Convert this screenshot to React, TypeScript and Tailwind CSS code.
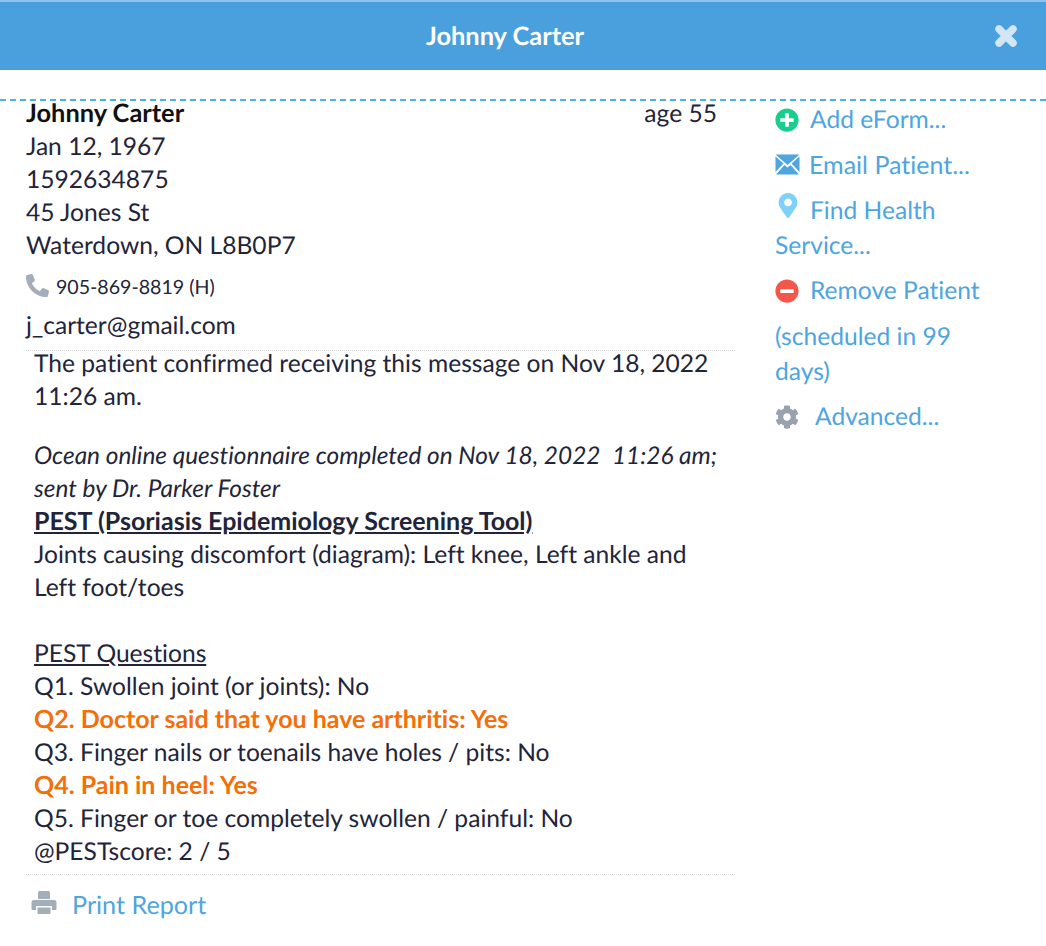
import { FaPlusCircle, FaMinusCircle, FaMapMarkerAlt, FaCog, FaPhone } from "react-icons/fa";

export default function App() {
  return (
    <div className="w-[1046px] h-[946px] overflow-hidden bg-white font-['Lato',sans-serif] text-[24.6px] leading-[33px] text-[#22243a] [text-rendering:geometricPrecision] [font-variant-ligatures:none]">
      <header className="relative h-[70px] border-t-2 border-[#8fc2e8] bg-[#4aa0dc] flex items-center justify-center">
        <h1 className="font-bold text-white text-[25.4px] mr-[36px]">Johnny Carter</h1>
        <svg viewBox="0 0 24 24" className="absolute right-[28px] top-[22px] w-[24px] h-[24px]">
          <path d="M5 5 L19 19 M19 5 L5 19" stroke="#d2e6f6" strokeWidth="7.5" strokeLinecap="round" />
        </svg>
      </header>
      <div className="mt-[29px] border-t-2 border-dashed border-[#4ab2e8] flex">
        <main className="w-[709px] ml-[26px] shrink-0">
          <div className="flex justify-between pr-[18px] -mt-[4px]">
            <span className="font-bold text-[#111] text-[25.4px]">Johnny Carter</span>
            <span>age 55</span>
          </div>
          <div>Jan 12, 1967</div>
          <div>1592634875</div>
          <div>45 Jones St</div>
          <div>Waterdown, ON L8B0P7</div>
          <div className="flex items-center mt-[9px] text-[19.6px] h-[33px]">
            <FaPhone className="text-[#a3aebb] w-[23px] h-[23px] mr-[7px] -scale-x-100 -mt-[4px]" />
            <span>905-869-8819 (H)</span>
          </div>
          <div className="mt-[5px] pb-[8px] border-b border-dotted border-[#d8d8d8]">j_carter@gmail.com</div>
          <div className="pl-[8px] pr-[10px] -mt-[4px]">
            <p>The patient confirmed receiving this message on Nov 18, 2022 11:26&nbsp;am.</p>
            <p className="italic text-[24.4px] mt-[26px]">Ocean online questionnaire completed on Nov 18, 2022&nbsp; 11:26 am; sent by Dr. Parker Foster</p>
            <p className="font-bold underline text-[25px]">PEST (Psoriasis Epidemiology Screening Tool)</p>
            <p className="pr-[10px]">Joints causing discomfort (diagram): Left knee, Left ankle and Left foot/toes</p>
            <p className="underline mt-[33px]">PEST Questions</p>
            <p>Q1. Swollen joint (or joints): No</p>
            <p className="font-bold text-[#f36f0a] text-[25px]">Q2. Doctor said that you have arthritis: Yes</p>
            <p>Q3. Finger nails or toenails have holes / pits: No</p>
            <p className="font-bold text-[#f36f0a] text-[25px]">Q4. Pain in heel: Yes</p>
            <p>Q5. Finger or toe completely swollen / painful: No</p>
            <p>@PESTscore: 2 / 5</p>
          </div>
          <div className="mt-[6px] pt-[14px] border-t border-dotted border-[#d8d8d8] flex items-center pl-[5px] text-[#4ea5e0] text-[25.2px]">
            <svg viewBox="0 0 26 26" className="w-[26px] h-[26px] mr-[15px] -mt-[5px]">
              <path d="M7 2.5 Q7 1 8.5 1 H17.5 Q19 1 19 2.5 V9 H7 Z" fill="#a3aebb" />
              <path d="M3 10 H23 Q25.5 10 25.5 12.5 V19 Q25.5 20 24 20 H21 V16 H5 V20 H2 Q0.5 20 0.5 19 V12.5 Q0.5 10 3 10 Z" fill="#a3aebb" />
              <rect x="6.5" y="17.5" width="13" height="6.5" rx="1" fill="#a3aebb" />
            </svg>
            <span>Print Report</span>
          </div>
        </main>
        <aside className="ml-[40px] w-[230px] text-[#4ea5e0] pt-[1px]">
          <div className="flex items-center h-[35px]">
            <FaPlusCircle className="text-[#17ce8c] w-[24px] h-[24px] mr-[11px]" />
            <span>Add eForm...</span>
          </div>
          <div className="flex items-center h-[35px] mt-[11px]">
            <svg viewBox="0 0 25 21" className="w-[25px] h-[21px] mr-[10px] -mt-[3px]">
              <path d="M0.5 0.5 H24.5 L12.5 11 Z" fill="#4ea5e0" />
              <path d="M0.5 2.5 L8.5 9.5 L0.5 18 Z M24.5 2.5 L16.5 9.5 L24.5 18 Z" fill="#4ea5e0" />
              <path d="M1 20.5 L9.5 11 L12.5 13.5 L15.5 11 L24 20.5 Z" fill="#4ea5e0" />
            </svg>
            <span className="text-[25px] -ml-[1px]">Email Patient...</span>
          </div>
          <div className="mt-[10px] leading-[35px]">
            <FaMapMarkerAlt className="inline-block text-[#7fd0fb] w-[26px] h-[25px] mr-[9px] align-[-1px] -translate-y-[2px]" />
            Find Health Service...
          </div>
          <div className="flex items-center h-[35px] mt-[10px]">
            <FaMinusCircle className="text-[#f3574a] w-[24px] h-[24px] mr-[11px]" />
            <span>Remove Patient</span>
          </div>
          <div className="mt-[11px] leading-[35px]">(scheduled in 99 days)</div>
          <div className="flex items-center h-[35px] mt-[10px]">
            <FaCog className="text-[#98a1ad] w-[24px] h-[24px] mr-[16px]" />
            <span>Advanced...</span>
          </div>
        </aside>
      </div>
    </div>
  );
}
